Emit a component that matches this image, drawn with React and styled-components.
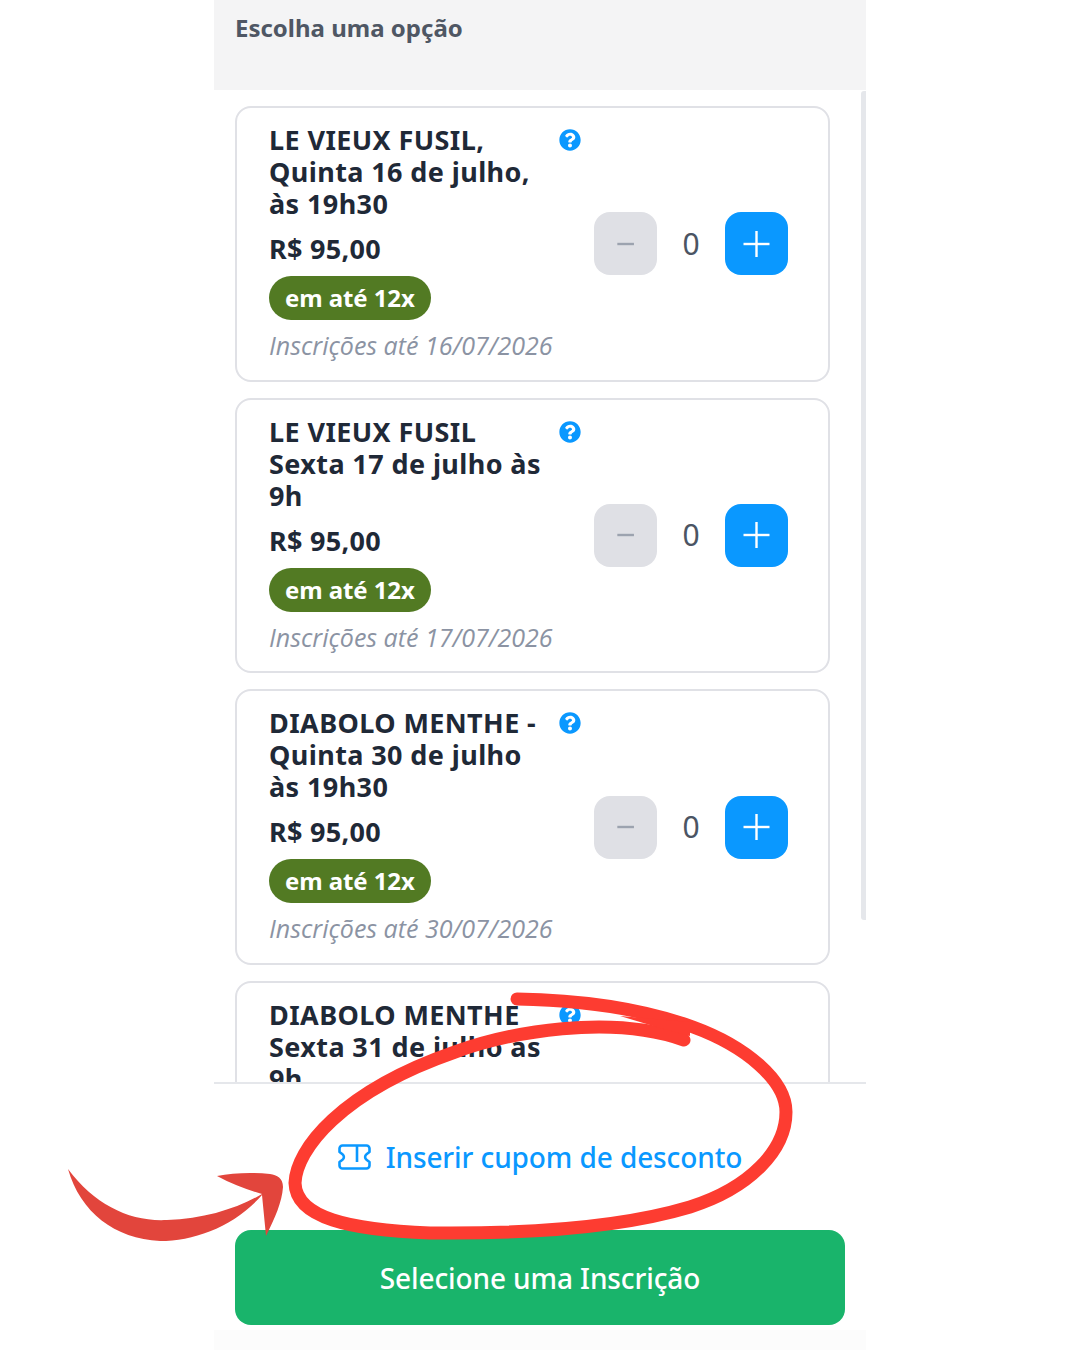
import React from 'react';
import styled, { createGlobalStyle } from 'styled-components';
import { FaQuestionCircle } from 'react-icons/fa';

const GlobalStyle = createGlobalStyle`
    html, body {
        margin: 0;
        padding: 0;
        background: #fff;
    }
    * {
        box-sizing: border-box;
    }
`

const Page = styled.div`
    position: relative;
    width: 1080px;
    height: 1350px;
    overflow: hidden;
    font-family: "Noto Sans", "Open Sans", sans-serif;
`

const Panel = styled.div`
    display: flex;
    flex-direction: column;
    width: 652px;
    height: 1350px;
    margin-left: 214px;
`

const Header = styled.div`
    flex: none;
    height: 90px;
    padding: 12px 21px;
    background: #f4f4f5;
    color: #4f5764;
    font-size: 24px;
    font-weight: 700;
    line-height: 32px;
`

const ScrollArea = styled.div`
    position: relative;
    flex: none;
    height: 992px;
    overflow: hidden;
    padding: 16px 36px 0 21px;
    display: flex;
    flex-direction: column;
    gap: 16px;
`

const ScrollThumb = styled.div`
    position: absolute;
    top: 1px;
    right: 0;
    width: 5px;
    height: 829px;
    border-radius: 3px 0 0 3px;
    background: #e5e7eb;
`

const Card = styled.div`
    flex: none;
    display: flex;
    align-items: center;
    justify-content: space-between;
    height: 275.67px;
    padding: 16px 40px 16px 32px;
    border: 2px solid #e0e1e6;
    border-radius: 16px;
    background: #fff;
`

const Info = styled.div`
    align-self: flex-start;
    width: 312px;
`

const TitleRow = styled.div`
    display: flex;
    justify-content: space-between;
    align-items: flex-start;
`

const Title = styled.div`
    width: 285px;
    color: #1f2937;
    font-size: 27px;
    font-weight: 700;
    line-height: 32px;
    letter-spacing: 0.4px;
    white-space: nowrap;
`

const Help = styled.span`
    display: flex;
    margin-top: 5px;
    color: #0a98ff;
    font-size: 22px;
`

const Price = styled.div`
    margin-top: 11px;
    color: #1f2937;
    font-size: 27px;
    font-weight: 700;
    line-height: 35px;
    letter-spacing: 0.3px;
`

const Pill = styled.div`
    display: inline-block;
    margin-top: 10px;
    padding: 0 16px;
    height: 44px;
    border-radius: 22px;
    background: #527a23;
    color: #fff;
    font-size: 24px;
    font-weight: 700;
    line-height: 44px;
    letter-spacing: -0.1px;
`

const Deadline = styled.div`
    margin-top: 7px;
    color: #8b93a3;
    font-family: "Open Sans", sans-serif;
    font-size: 25px;
    font-style: italic;
    line-height: 36px;
    white-space: nowrap;
`

const Stepper = styled.div`
    display: flex;
    align-items: center;
`

const StepButton = styled.div`
    display: flex;
    align-items: center;
    justify-content: center;
    width: 63px;
    height: 63px;
    border-radius: 16px;
    background: ${p => p.$active ? '#0a98ff' : '#dfe0e5'};
    color: ${p => p.$active ? '#fff' : '#9ca3af'};
`

const Count = styled.div`
    width: 68px;
    text-align: center;
    color: #4b5563;
    font-size: 30px;
    line-height: 40px;
`

const Footer = styled.div`
    flex: 1;
    display: flex;
    flex-direction: column;
    align-items: stretch;
    border-top: 2px solid #e5e7eb;
    background: linear-gradient(#fff 0, #fff 246px, #fcfcfc 246px);
`

const Coupon = styled.div`
    display: flex;
    align-items: center;
    justify-content: center;
    gap: 15px;
    height: 146px;
    color: #0a98ff;
    font-size: 28px;
    font-weight: 500;
    line-height: 36px;
    letter-spacing: -0.1px;
`

const Submit = styled.div`
    display: flex;
    align-items: center;
    justify-content: center;
    width: 610px;
    height: 95px;
    margin-left: 21px;
    border-radius: 16px;
    background: #19b46b;
    color: #fff;
    font-size: 28px;
    font-weight: 500;
    line-height: 36px;
    letter-spacing: -0.1px;
`

const Overlay = styled.svg`
    position: absolute;
    top: 0;
    left: 0;
`

const tickets = [
    { title: ['LE VIEUX FUSIL,', 'Quinta 16 de julho,', 'às 19h30'], date: '16/07/2026' },
    { title: ['LE VIEUX FUSIL', 'Sexta 17 de julho às', '9h'], date: '17/07/2026' },
    { title: ['DIABOLO MENTHE -', 'Quinta 30 de julho', 'às 19h30'], date: '30/07/2026' },
    { title: ['DIABOLO MENTHE', 'Sexta 31 de julho as', '9h'], date: '31/07/2026' },
];

function PlusMinus({ plus }) {
    return (
        <svg width="28" height="28" viewBox="0 0 28 28" fill="none" stroke="currentColor" strokeWidth="2.4">
            <path d="M.5 14h26" transform={plus ? undefined : 'translate(5 0) scale(.64 1)'} />
            {plus && <path d="M13.500 1v26" />}
        </svg>
    );
}

function TicketIcon() {
    return (
        <svg width="33" height="26" viewBox="0 0 33 26" fill="none" stroke="currentColor" strokeWidth="2.6" strokeLinejoin="round">
            <path d="M4.5 1.5h24a3 3 0 0 1 3 3v3.5l-3 2.2a3.5 3.5 0 0 0 0 5.6l3 2.2v3.5a3 3 0 0 1-3 3h-24a3 3 0 0 1-3-3V18l3-2.2a3.5 3.5 0 0 0 0-5.6l-3-2.2V4.500a3 3 0 0 1 3-3z" />
            <path d="M19 2v16" />
        </svg>
    );
}

function TicketCard({ title, date }) {
    return (
        <Card>
            <Info>
                <TitleRow>
                    <Title>{title.map(line => <div key={line}>{line}</div>)}</Title>
                    <Help><FaQuestionCircle /></Help>
                </TitleRow>
                <Price>R$ 95,00</Price>
                <Pill>em até 12x</Pill>
                <Deadline>Inscrições até {date}</Deadline>
            </Info>
            <Stepper>
                <StepButton><PlusMinus /></StepButton>
                <Count>0</Count>
                <StepButton $active><PlusMinus plus /></StepButton>
            </Stepper>
        </Card>
    );
}

export default function App() {
    return (
        <Page>
            <GlobalStyle />
            <Panel>
                <Header>Escolha uma opção</Header>
                <ScrollArea>
                    <ScrollThumb />
                    {tickets.map(t => <TicketCard key={t.date} title={t.title} date={t.date} />)}
                </ScrollArea>
                <Footer>
                    <Coupon><TicketIcon />Inserir cupom de desconto</Coupon>
                    <Submit>Selecione uma Inscrição</Submit>
                </Footer>
            </Panel>
            <Overlay width="1080" height="1350" viewBox="0 0 1080 1350">
                <path
                    d="M517 999 C580 1000 640 1008 693 1027 C745 1046 786 1080 786 1112 C786 1150 750 1188 690 1207 C620 1228 520 1234 430 1233 C350 1230 296 1218 295 1183 C296 1150 340 1092 455 1052 C510 1032 610 1014 684 1040"
                    fill="none"
                    stroke="#fd3c31"
                    strokeWidth="13"
                    strokeLinecap="round"
                    strokeLinejoin="round"
                />
                <path d="M620 1016 L690 1022 L690 1036 L660 1028 Z" fill="#fd3c31" />
                <path
                    d="M68 1169 C95 1205 130 1222 167 1220 C205 1219 238 1208 262 1195 L266 1236 C275 1218 282 1202 283 1187 C283 1178 277 1175 270 1174 C252 1172 232 1173 217 1176 C232 1184 248 1190 262 1194 C238 1208 205 1219 167 1220 C205 1219 238 1208 262 1195 C235 1226 195 1241 160 1241 C115 1239 80 1212 68 1169 Z"
                    fill="#e2453c"
                />
            </Overlay>
        </Page>
    );
}
